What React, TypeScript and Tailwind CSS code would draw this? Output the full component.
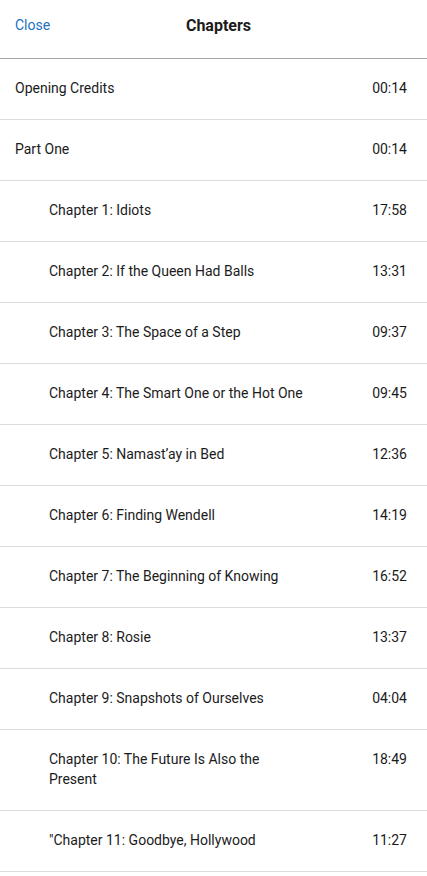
import React from "react";

const rows: { title: string; time: string; indent: boolean }[] = [
  { title: "Opening Credits", time: "00:14", indent: false },
  { title: "Part One", time: "00:14", indent: false },
  { title: "Chapter 1: Idiots", time: "17:58", indent: true },
  { title: "Chapter 2: If the Queen Had Balls", time: "13:31", indent: true },
  { title: "Chapter 3: The Space of a Step", time: "09:37", indent: true },
  { title: "Chapter 4: The Smart One or the Hot One", time: "09:45", indent: true },
  { title: "Chapter 5: Namast’ay in Bed", time: "12:36", indent: true },
  { title: "Chapter 6: Finding Wendell", time: "14:19", indent: true },
  { title: "Chapter 7: The Beginning of Knowing", time: "16:52", indent: true },
  { title: "Chapter 8: Rosie", time: "13:37", indent: true },
  { title: "Chapter 9: Snapshots of Ourselves", time: "04:04", indent: true },
  { title: "Chapter 10: The Future Is Also the Present", time: "18:49", indent: true },
  { title: "\"Chapter 11: Goodbye, Hollywood", time: "11:27", indent: true },
];

export default function App() {
  return (
    <div className="w-[427px] min-h-[876px] bg-white text-[#1b1b1b] font-['Roboto',sans-serif]">
      <div className="relative h-[59px] border-b border-[#a8a8a8]">
        <button className="absolute left-[15px] top-[15px] text-[14px] leading-5 text-[#1a72c4]">Close</button>
        <div className="pt-[16px] pl-[10px] text-center text-[16px] leading-5 font-bold">Chapters</div>
      </div>
      {rows.map((r, i) => (
        <div key={i} className={`flex justify-between items-start border-b border-[#dcdcdc] pt-[19px] pb-[21px] pr-5 ${r.indent ? "pl-[49px]" : "pl-[15px]"}`}>
          <div className="text-[14px] leading-5 max-w-[257px]">{r.title}</div>
          <div className="text-[14px] leading-5">{r.time}</div>
        </div>
      ))}
    </div>
  );
}
